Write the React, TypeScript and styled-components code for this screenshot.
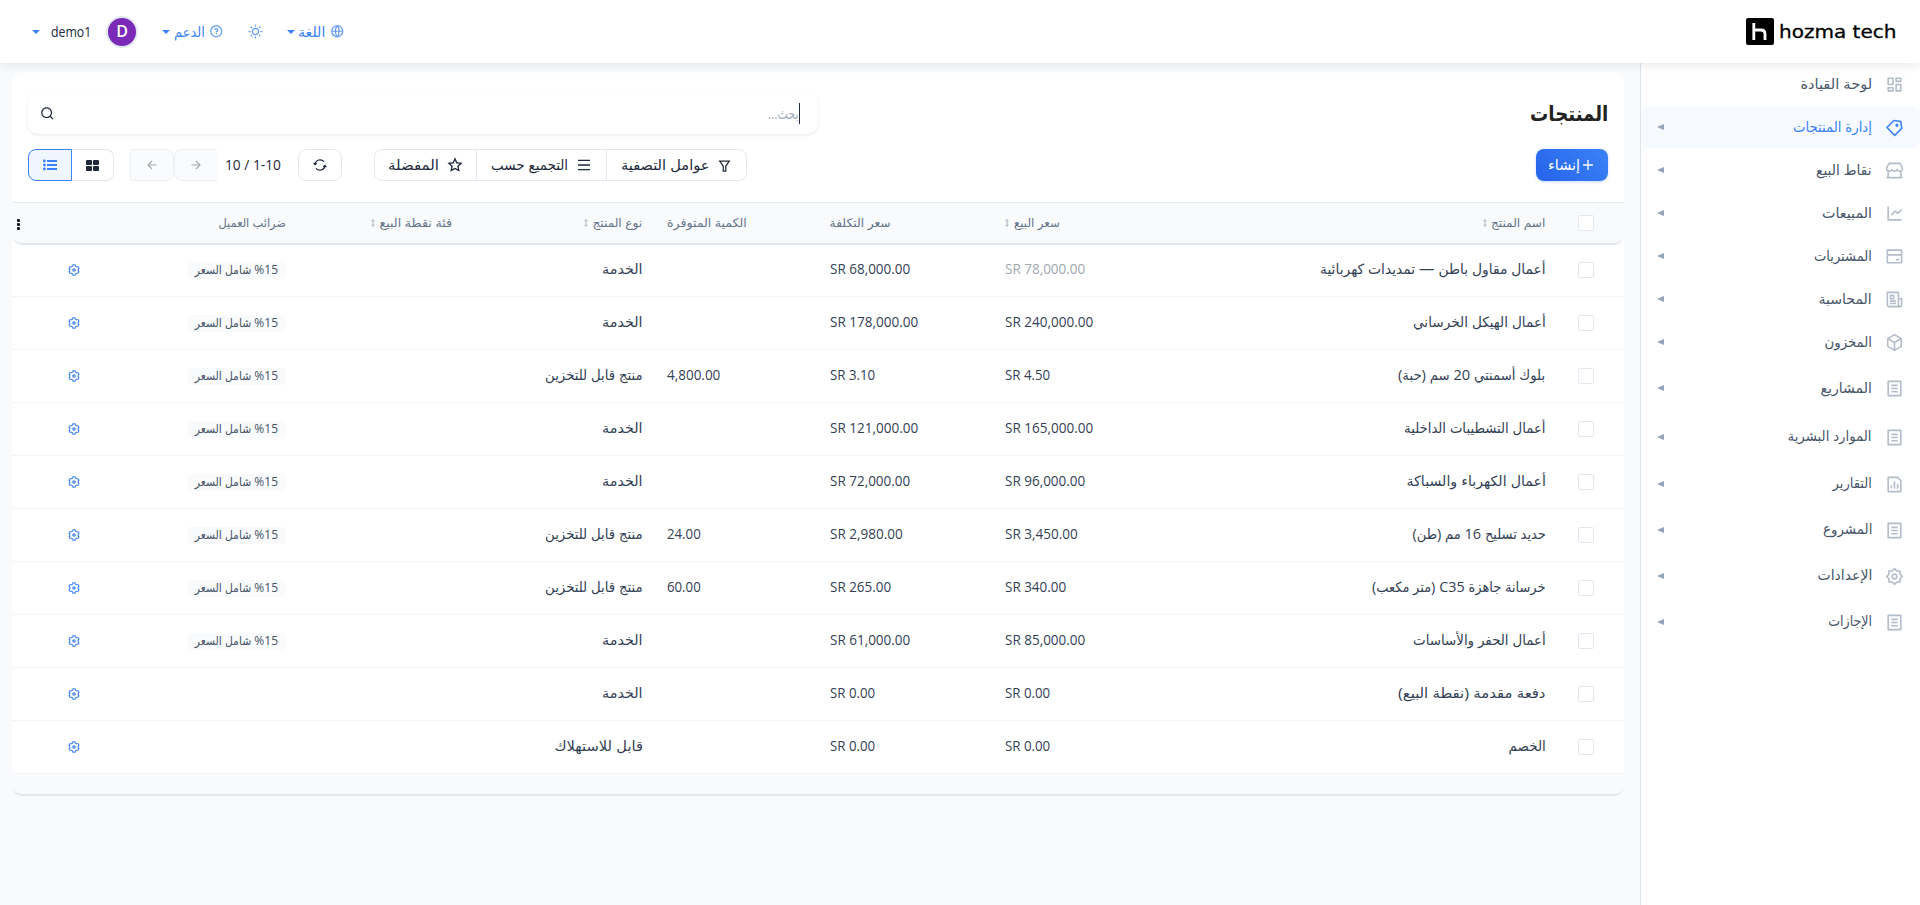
import React, { useLayoutEffect, useRef, useState } from "react";
import styled, { createGlobalStyle, css } from "styled-components";
import {
  RiBankCardLine,
  RiBox3Line,
  RiDashboardLine,
  RiFileListLine,
  RiFilterLine,
  RiGlobalLine,
  RiLineChartLine,
  RiMenuLine,
  RiNewspaperLine,
  RiPriceTag3Line,
  RiQuestionLine,
  RiSearchLine,
  RiSettings2Line,
  RiSettings4Line,
  RiStarLine,
  RiStore2Line,
  RiSunLine,
} from "react-icons/ri";

const c = {
  page: "#f8fafc",
  line: "#e2e8f0",
  rowLine: "#f1f5f9",
  ink: "#1e293b",
  cell: "#334155",
  nav: "#475569",
  head: "#64748b",
  muted: "#94a3b8",
  blue: "#3b82f6",
};

const Global = createGlobalStyle`
  * { box-sizing: border-box; }
  body {
    margin: 0;
    background: ${c.page};
    color: ${c.ink};
    font-family: "Open Sans", "DejaVu Sans Condensed", "DejaVu Sans", sans-serif;
    font-size: 14px;
    line-height: 20px;
    overflow: hidden;
  }
  svg { display: block; flex: none; }
  button { font: inherit; color: inherit; margin: 0; }
`;

/* Text that is condensed or widened horizontally to fill its measure. */
const Measure = styled.span<{ $w: number }>`
  display: block;
  flex: none;
  width: ${(p) => p.$w}px;
  white-space: nowrap;
  text-align: start;
`;
const MeasureText = styled.span`
  display: inline-block;
  transform-origin: right center;
  [dir="ltr"] > & {
    transform-origin: left center;
  }
`;

function Fit({ w, ltr, children }: { w: number; ltr?: boolean; children: React.ReactNode }) {
  const ref = useRef<HTMLSpanElement>(null);
  const [scale, setScale] = useState(1);
  useLayoutEffect(() => {
    if (ref.current) setScale(w / ref.current.offsetWidth);
  }, [w]);
  return (
    <Measure $w={w} dir={ltr ? "ltr" : "rtl"}>
      <MeasureText ref={ref} style={{ transform: `scaleX(${scale})` }}>
        {children}
      </MeasureText>
    </Measure>
  );
}

const Page = styled.div`
  height: 905px;
  display: flex;
  flex-direction: column;
`;

/* ---------- top bar ---------- */
const TopBar = styled.header`
  height: 63px;
  flex: none;
  display: flex;
  align-items: center;
  justify-content: space-between;
  padding: 0 23px 0 32px;
  background: #fff;
  box-shadow: 0 2px 10px rgba(0, 0, 0, 0.09);
  position: relative;
  z-index: 1;
`;
const Brand = styled.div`
  display: flex;
  align-items: center;
  gap: 5px;
  color: #000;
`;
const BrandName = styled.div`
  font: 400 18.5px/28px "DejaVu Sans", sans-serif;
  -webkit-text-stroke: 0.3px #000;
`;
const Tools = styled.div`
  display: flex;
  align-items: center;
  color: ${c.blue};
`;
const Tool = styled.div<{ $gap: number; $end?: number }>`
  display: flex;
  align-items: center;
  gap: ${(p) => p.$gap}px;
  margin-left: ${(p) => p.$end ?? 0}px;
`;
const Pale = styled.span`
  opacity: 0.8;
`;
const UserName = styled.div`
  color: ${c.ink};
`;
const Avatar = styled.div`
  width: 32px;
  height: 32px;
  padding-bottom: 1px;
  border-radius: 50%;
  border: 2px solid ${c.line};
  background: #7b2ab8;
  color: #fff;
  display: grid;
  place-items: center;
  font-weight: 600;
  font-size: 16px;
`;
const Caret = styled.i`
  border: 4px solid transparent;
  border-top-color: ${c.blue};
  border-bottom: 0;
`;

/* ---------- frame ---------- */
const Body = styled.div`
  flex: 1;
  display: flex;
  min-height: 0;
`;
const Sidebar = styled.nav`
  width: 280px;
  flex: none;
  background: #fff;
  border-left: 1px solid #dbe4ef;
`;
const NavCell = styled.div<{ $h: number }>`
  height: ${(p) => p.$h}px;
  display: flex;
  align-items: center;
`;
const NavItem = styled.a<{ $active?: boolean }>`
  width: 100%;
  height: 41px;
  display: flex;
  align-items: center;
  gap: 12.5px;
  padding: 0 16.5px 0 16px;
  border-radius: 8px;
  color: ${c.nav};
  > svg {
    color: #b3bccb;
  }
  > span {
    padding-bottom: 2px;
  }
  ${(p) =>
    p.$active &&
    css`
      background: #f6faff;
      color: ${c.blue};
      > svg {
        color: ${c.blue};
      }
    `}
`;
const NavArrow = styled.i`
  margin-right: auto;
  margin-bottom: 1px;
  border: 3.5px solid transparent;
  border-right: 7px solid ${c.muted};
  border-left: 0;
`;

const Main = styled.main`
  flex: 1;
  padding: 9px 16px 0 12px;
`;
const Card = styled.section`
  background: #fff;
  border-radius: 10px;
`;
const CardTop = styled.div`
  display: grid;
  grid-template-columns: 1fr 1fr;
  row-gap: 15px;
  padding: 20px 16px 21px;
`;
const Title = styled.h1`
  margin: 0;
  align-self: center;
  font-size: 21px;
  line-height: 30px;
  font-weight: 700;
  color: #222;
`;
const Search = styled.div`
  height: 42px;
  display: flex;
  align-items: center;
  padding: 0 18px 0 11.5px;
  border-radius: 10px;
  box-shadow: 0 1px 3px rgba(15, 23, 42, 0.1);
  color: #a3aebe;
  font-size: 15px;
  > svg {
    margin-right: auto;
    color: ${c.ink};
  }
`;
const Cursor = styled.i`
  width: 1px;
  height: 21px;
  background: ${c.ink};
`;
const Create = styled.button`
  width: 72px;
  height: 32px;
  display: flex;
  align-items: center;
  gap: 3px;
  padding: 0 15px;
  border: 0;
  border-radius: 8px;
  background: linear-gradient(225deg, #3b82f6, #2563eb);
  box-shadow: 0 1px 3px rgba(37, 99, 235, 0.25);
  color: #fff;
`;
const Controls = styled.div`
  display: flex;
  justify-content: flex-end;
  align-items: center;
`;
const Group = styled.div<{ $after?: number }>`
  display: flex;
  height: 32px;
  margin-left: ${(p) => p.$after ?? 0}px;
  border: 1px solid ${c.line};
  border-radius: 8px;
`;
const Segment = styled.button<{ $w: number; $gap?: number; $last?: boolean }>`
  width: ${(p) => p.$w}px;
  display: flex;
  align-items: center;
  justify-content: center;
  gap: ${(p) => p.$gap ?? 0}px;
  padding: 0;
  border: 0;
  background: none;
  border-left: ${(p) => (p.$last ? 0 : 1)}px solid ${c.line};
`;
const ViewButton = styled.button<{ $on?: boolean }>`
  width: ${(p) => (p.$on ? 44 : 42)}px;
  height: 32px;
  display: grid;
  place-items: center;
  padding: 0;
  border: 1px solid ${(p) => (p.$on ? c.blue : c.line)};
  border-left-width: ${(p) => (p.$on ? 1 : 0)}px;
  border-radius: ${(p) => (p.$on ? "8px 0 0 8px" : "0 8px 8px 0")};
  background: ${(p) => (p.$on ? "#eff6ff" : "#fff")};
  color: ${(p) => (p.$on ? c.blue : c.ink)};
`;
const PageButton = styled.button<{ $next?: boolean }>`
  width: 43.5px;
  height: 32px;
  display: grid;
  place-items: center;
  padding: 0;
  border: 1px solid #edf1f6;
  border-right-width: ${(p) => (p.$next ? 1 : 0)}px;
  border-radius: ${(p) => (p.$next ? "0 8px 8px 0" : "8px 0 0 8px")};
  background: #fafbfd;
  color: #a5aab3;
  margin-left: ${(p) => (p.$next ? 16 : 0)}px;
`;
const Range = styled.div`
  margin: 0 17px 0 8px;
  b {
    font-weight: 500;
  }
`;

/* ---------- table ---------- */
const columns = css`
  display: grid;
  grid-template-columns: 66.5px 377.5px 187px 175.5px 163px 190.5px 166px 162px 124px;
  align-items: center;
`;
const HeadRow = styled.div`
  ${columns}
  height: 43px;
  border-top: 1px solid ${c.line};
  border-bottom: 2px solid ${c.line};
  border-radius: 0 0 10px 10px;
  background: ${c.page};
  color: ${c.head};
  font-size: 12px;
`;
const Row = styled.div`
  ${columns}
  height: 53px;
  border-bottom: 1px solid ${c.rowLine};
  color: ${c.cell};
`;
const Rows = styled.div`
  margin-top: -1px;
`;
const Cell = styled.div<{ $left?: boolean; $center?: boolean; $pale?: boolean }>`
  display: flex;
  align-items: center;
  gap: 5px;
  padding: 0 12px;
  justify-content: ${(p) => (p.$left ? "flex-end" : p.$center ? "center" : "flex-start")};
  ${(p) => p.$pale && "color: #a0a7b3;"}
  ${Row} > & > ${Measure} {
    padding-bottom: 2px;
  }
`;
const Box = styled.span`
  width: 16px;
  height: 16px;
  border: 1px solid ${c.line};
  border-radius: 2px;
  background: #fff;
`;
const CheckCell = styled.div`
  padding-right: 30px;
  display: flex;
  ${HeadRow} > & {
    padding-bottom: 1px;
  }
`;
const Badge = styled.span`
  height: 17px;
  display: flex;
  align-items: center;
  padding: 0 8px;
  border-radius: 5px;
  background: ${c.page};
  color: ${c.nav};
  font-size: 12px;
`;
const MoreCell = styled.div`
  display: flex;
  justify-content: flex-end;
  padding-left: 5px;
`;
const Dots = styled.span`
  display: grid;
  gap: 1px;
  padding-top: 3px;
  i {
    width: 3px;
    height: 3px;
    border-radius: 1px;
    background: #0f172a;
  }
`;
const RowGear = styled(RiSettings4Line)`
  color: ${c.blue};
  transform: rotate(90deg);
`;
const Foot = styled.div`
  height: 22px;
  background: ${c.page};
  border-bottom: 2px solid ${c.line};
  border-radius: 0 0 10px 10px;
`;
const FootWrap = styled.div`
  background: ${c.page};
`;

const SortIcon = () => (
  <svg width="4" height="8" viewBox="0 0 4 8" fill="none" stroke="#94a3b8" strokeWidth="0.8">
    <path d="M2 .8v6.4M.5 2 2 .6 3.5 2M.5 6 2 7.4 3.5 6" />
  </svg>
);
const PlusIcon = () => (
  <svg width="10" height="10" viewBox="0 0 10 10" stroke="#fff" strokeWidth="1.3">
    <path d="M5 0v10M0 5h10" />
  </svg>
);
const ArrowIcon = ({ right }: { right?: boolean }) => (
  <svg width="10" height="10" viewBox="0 0 10 10" fill="none" stroke="currentColor" strokeWidth="1.2">
    <path d={right ? "M.5 5h8.5M5 1l4 4-4 4" : "M9.5 5H1M5 1 1 5l4 4"} />
  </svg>
);
const RefreshIcon = () => (
  <svg width="14" height="14" viewBox="0 0 14 14" fill="none" stroke="currentColor" strokeWidth="1.2">
    <path d="M2 6.200a5.100 5.100 0 0 1 9-2.500M12 7.800a5.100 5.100 0 0 1-9 2.500" />
    <path d="M.7 4.800 2 6.700l1.800-1.400M13.300 9.200 12 7.300l-1.800 1.400" />
  </svg>
);
const GridIcon = () => (
  <svg width="13" height="11" viewBox="0 0 13 11" fill="currentColor">
    <rect width="6" height="5" rx="1" />
    <rect x="7" width="6" height="5" rx="1" />
    <rect y="6" width="6" height="5" rx="1" />
    <rect x="7" y="6" width="6" height="5" rx="1" />
  </svg>
);
const ListIcon = () => (
  <svg width="14" height="12" viewBox="0 0 14 12" fill="currentColor">
    <path d="M4 1h10v2H4zM4 5h10v2H4zM4 9h10v2H4z" />
    <circle cx="1.4" cy="2" r="1.4" />
    <circle cx="1.4" cy="6" r="1.4" />
    <circle cx="1.4" cy="10" r="1.4" />
  </svg>
);
const ReportIcon = ({ size }: { size: number }) => (
  <svg width={size} height={size} viewBox="0 0 24 24" fill="none" stroke="currentColor" strokeWidth="2">
    <path d="M16 3H4v18h16V7z" strokeLinejoin="round" />
    <path d="M8 17v-4M12 17V8M16 17v-6" />
  </svg>
);
const BrandMark = () => (
  <svg width="28" height="27" viewBox="0 0 28 27">
    <rect width="28" height="27" rx="2" fill="#000" />
    <path d="M7.800 5v17M7.800 12h7q4.200 0 4.200 4v6" fill="none" stroke="#fff" strokeWidth="2.800" />
  </svg>
);

type Nav = [string, number, React.ComponentType<{ size: number }>, number];
const nav: Nav[] = [
  ["لوحة القيادة", 71.5, RiDashboardLine, 43],
  ["إدارة المنتجات", 79, RiPriceTag3Line, 43],
  ["نقاط البيع", 56, RiStore2Line, 43],
  ["المبيعات", 50, RiLineChartLine, 43],
  ["المشتريات", 58, RiBankCardLine, 43],
  ["المحاسبة", 53.5, RiNewspaperLine, 43],
  ["المخزون", 47.5, RiBox3Line, 43],
  ["المشاريع", 51.5, RiFileListLine, 49],
  ["الموارد البشرية", 84.5, RiFileListLine, 48],
  ["التقارير", 39.5, ReportIcon, 46],
  ["المشروع", 49, RiFileListLine, 46],
  ["الإعدادات", 54.5, RiSettings2Line, 46],
  ["الإجازات", 44, RiFileListLine, 46],
];

type Txt = [string, number];
type Product = { name: Txt; price: Txt; cost: Txt; qty?: Txt; type: Txt; taxed: boolean; pale?: boolean };
const service: Txt = ["الخدمة", 41];
const stock: Txt = ["منتج قابل للتخزين", 98];
const products: Product[] = [
  { name: ["أعمال مقاول باطن — تمديدات كهربائية", 226], price: ["SR 78,000.00", 80], cost: ["SR 68,000.00", 80], type: service, taxed: true, pale: true },
  { name: ["أعمال الهيكل الخرساني", 133], price: ["SR 240,000.00", 88], cost: ["SR 178,000.00", 88], type: service, taxed: true },
  { name: ["بلوك أسمنتي 20 سم (حبة)", 147], price: ["SR 4.50", 45.5], cost: ["SR 3.10", 45.5], qty: ["4,800.00", 53], type: stock, taxed: true },
  { name: ["أعمال التشطيبات الداخلية", 142], price: ["SR 165,000.00", 88], cost: ["SR 121,000.00", 88], type: service, taxed: true },
  { name: ["أعمال الكهرباء والسباكة", 139.5], price: ["SR 96,000.00", 80], cost: ["SR 72,000.00", 80], type: service, taxed: true },
  { name: ["حديد تسليح 16 مم (طن)", 133.5], price: ["SR 3,450.00", 72.5], cost: ["SR 2,980.00", 72.5], qty: ["24.00", 34], type: stock, taxed: true },
  { name: ["خرسانة جاهزة C35 (متر مكعب)", 174], price: ["SR 340.00", 61.5], cost: ["SR 265.00", 61.5], qty: ["60.00", 34], type: stock, taxed: true },
  { name: ["أعمال الحفر والأساسات", 133], price: ["SR 85,000.00", 80], cost: ["SR 61,000.00", 80], type: service, taxed: true },
  { name: ["دفعة مقدمة (نقطة البيع)", 147], price: ["SR 0.00", 45.5], cost: ["SR 0.00", 45.5], type: service, taxed: false },
  { name: ["الخصم", 37.5], price: ["SR 0.00", 45.5], cost: ["SR 0.00", 45.5], type: ["قابل للاستهلاك", 88.5], taxed: false },
];

type Head = { t: Txt; sort?: boolean; left?: boolean };
const heads: Head[] = [
  { t: ["اسم المنتج", 54], sort: true },
  { t: ["سعر البيع", 46], sort: true, left: true },
  { t: ["سعر التكلفة", 61.5], left: true },
  { t: ["الكمية المتوفرة", 80], left: true },
  { t: ["نوع المنتج", 49.5], sort: true },
  { t: ["فئة نقطة البيع", 72.5], sort: true },
  { t: ["ضرائب العميل", 67.5] },
];

export default function App() {
  return (
    <Page dir="rtl">
      <Global />
      <TopBar dir="ltr">
        <Tools>
          <Tool $gap={11}>
            <Caret />
            <UserName><Fit w={40.5} ltr>demo1</Fit></UserName>
          </Tool>
          <Tool $gap={0} $end={14.5}><Avatar>D</Avatar></Tool>
          <Tool $gap={4} $end={24}>
            <Caret />
            <Fit w={31}>الدعم</Fit>
            <Pale><RiQuestionLine size={14.5} /></Pale>
          </Tool>
          <Tool $gap={0} $end={24}><Pale><RiSunLine size={15} /></Pale></Tool>
          <Tool $gap={4} $end={24}>
            <Caret />
            <Fit w={27}>اللغة</Fit>
            <Pale><RiGlobalLine size={14.5} /></Pale>
          </Tool>
        </Tools>
        <Brand>
          <BrandMark />
          <BrandName><Fit w={118} ltr>hozma tech</Fit></BrandName>
        </Brand>
      </TopBar>
      <Body>
        <Sidebar>
          {nav.map(([label, w, Icon, h], i) => (
            <NavCell key={label} $h={h}>
              <NavItem $active={i === 1}>
                <Icon size={19} />
                <Fit w={w}>{label}</Fit>
                {i > 0 && <NavArrow />}
              </NavItem>
            </NavCell>
          ))}
        </Sidebar>
        <Main>
          <Card>
            <CardTop>
              <Title><Fit w={78}>المنتجات</Fit></Title>
              <Search>
                <Cursor />
                <Fit w={31}>بحث...</Fit>
                <RiSearchLine size={14.5} />
              </Search>
              <Create>
                <PlusIcon />
                <Fit w={32}>إنشاء</Fit>
              </Create>
              <Controls>
                <Group $after={32}>
                  <Segment $w={140} $gap={8}><RiFilterLine size={15} /><Fit w={88}>عوامل التصفية</Fit></Segment>
                  <Segment $w={130} $gap={8}><RiMenuLine size={16} /><Fit w={77}>التجميع حسب</Fit></Segment>
                  <Segment $w={101} $gap={8} $last><RiStarLine size={16} /><Fit w={51}>المفضلة</Fit></Segment>
                </Group>
                <Group><Segment $w={42} $last><RefreshIcon /></Segment></Group>
                <Range><Fit w={56} ltr>10 / <b>1-10</b></Fit></Range>
                <PageButton><ArrowIcon right /></PageButton>
                <PageButton $next><ArrowIcon /></PageButton>
                <ViewButton><GridIcon /></ViewButton>
                <ViewButton $on><ListIcon /></ViewButton>
              </Controls>
            </CardTop>
            <HeadRow>
              <CheckCell><Box /></CheckCell>
              {heads.map((h) => (
                <Cell key={h.t[0]} $left={h.left}>
                  <Fit w={h.t[1]}>{h.t[0]}</Fit>
                  {h.sort && <SortIcon />}
                </Cell>
              ))}
              <MoreCell><Dots><i /><i /><i /></Dots></MoreCell>
            </HeadRow>
            <Rows>
              {products.map((p) => (
                <Row key={p.name[0]}>
                  <CheckCell><Box /></CheckCell>
                  <Cell><Fit w={p.name[1]}>{p.name[0]}</Fit></Cell>
                  <Cell $left $pale={p.pale}><Fit w={p.price[1]} ltr>{p.price[0]}</Fit></Cell>
                  <Cell $left><Fit w={p.cost[1]} ltr>{p.cost[0]}</Fit></Cell>
                  <Cell $left>{p.qty && <Fit w={p.qty[1]} ltr>{p.qty[0]}</Fit>}</Cell>
                  <Cell><Fit w={p.type[1]}>{p.type[0]}</Fit></Cell>
                  <Cell />
                  <Cell>{p.taxed && <Badge><Fit w={83}>%15 شامل السعر</Fit></Badge>}</Cell>
                  <Cell $center><RowGear size={14} /></Cell>
                </Row>
              ))}
            </Rows>
            <FootWrap><Foot /></FootWrap>
          </Card>
        </Main>
      </Body>
    </Page>
  );
}
